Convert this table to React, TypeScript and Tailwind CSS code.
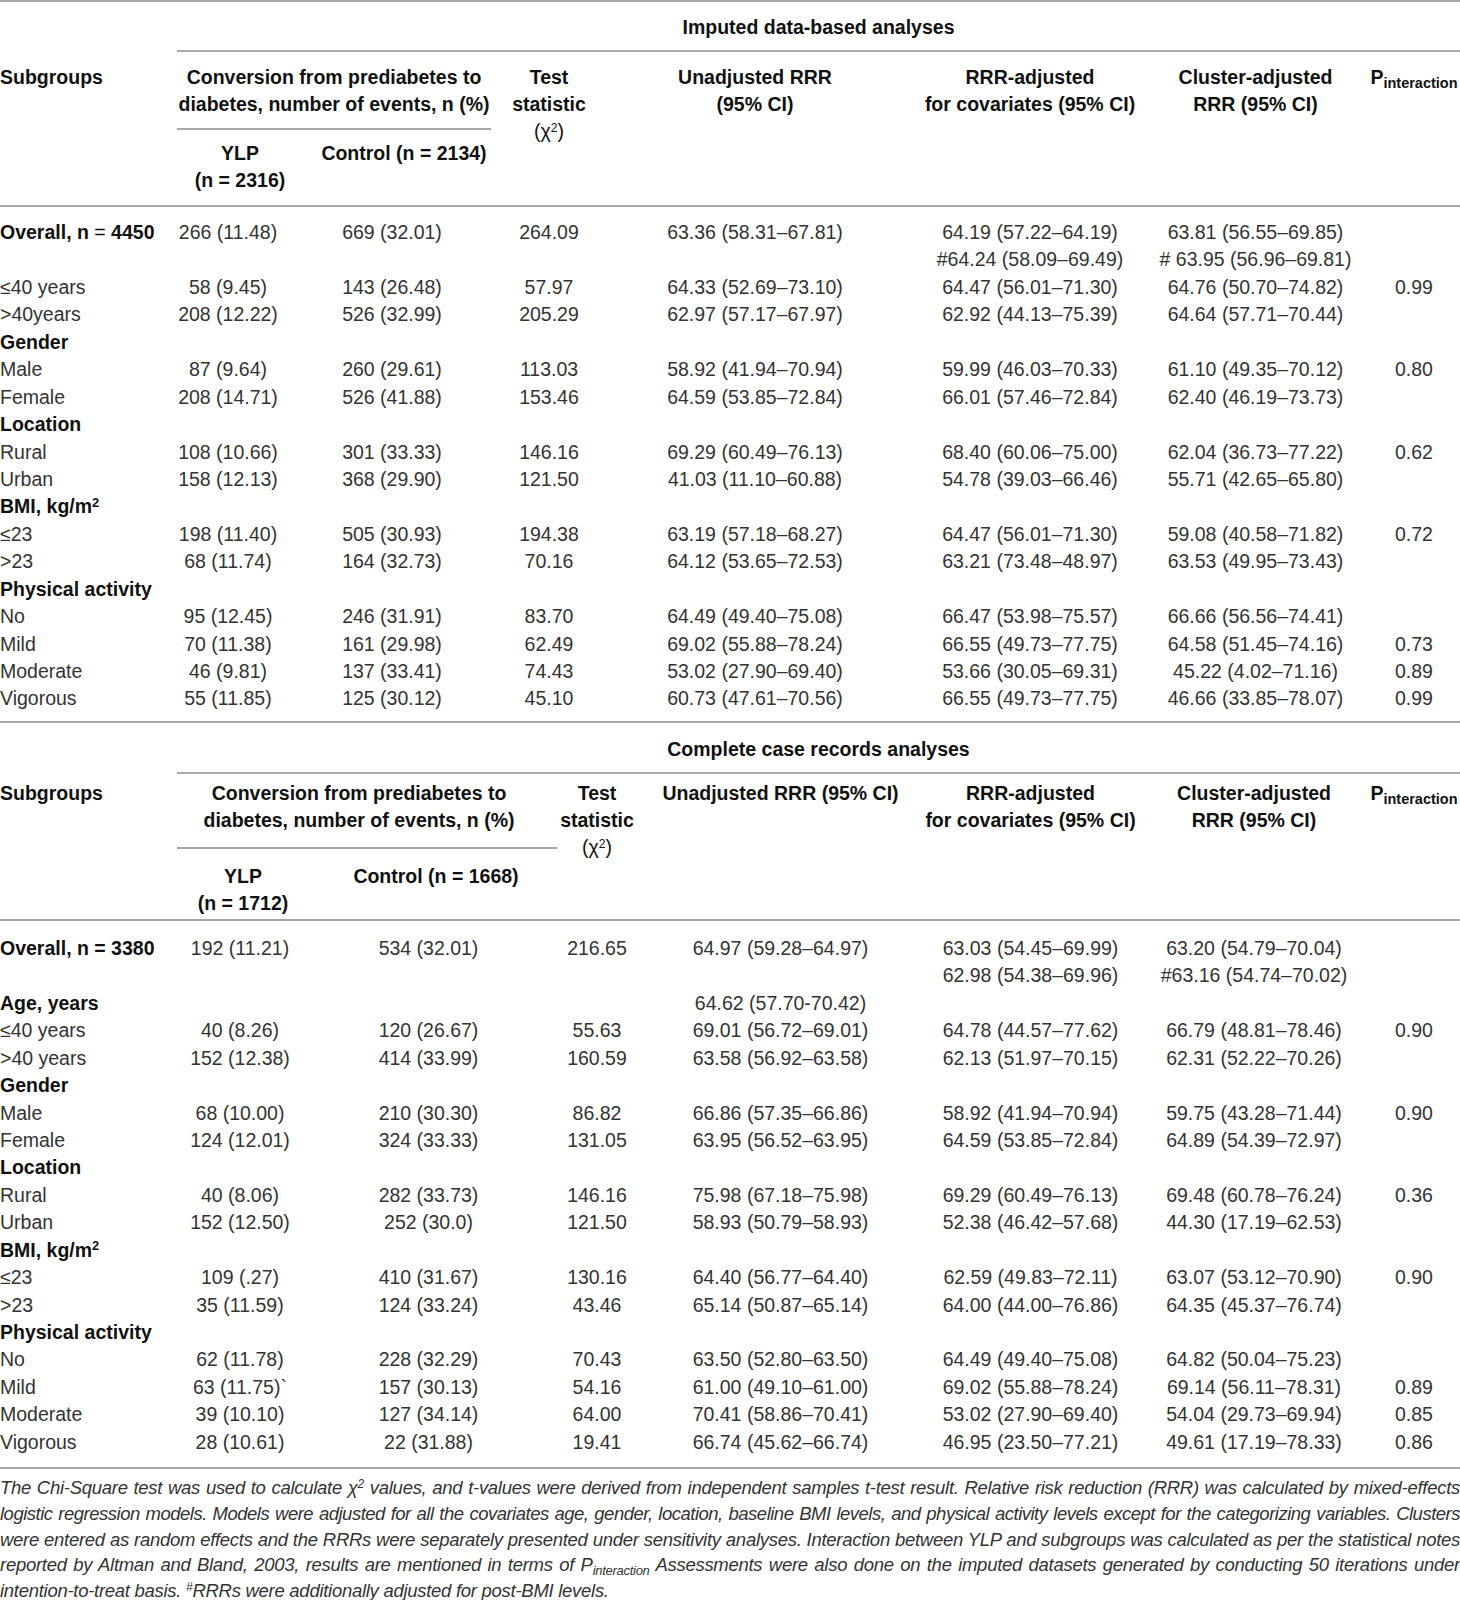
import React from "react";

const T1 = "grid grid-cols-[177px_102px_226px_88px_324px_226px_225px_92px]";
const T2 = "grid grid-cols-[177px_126px_251px_86px_281px_219px_228px_92px]";
const RULE = "h-[2px] bg-[#a9a9a9]";

type R = { l: React.ReactNode; b?: boolean; v?: string[] };

function DataRows({ rows, grid }: { rows: R[]; grid: string }) {
  return (
    <>
      {rows.map((r, i) => (
        <div key={i} className={`${grid} h-[27.45px] leading-[27.45px]`}>
          <div className={r.b ? "whitespace-nowrap font-bold text-[#111]" : "whitespace-nowrap"}>{r.l}</div>
          {[0, 1, 2, 3, 4, 5, 6].map((j) => (
            <div key={j} className="whitespace-nowrap text-center">
              {r.v ? r.v[j] ?? "" : ""}
            </div>
          ))}
        </div>
      ))}
    </>
  );
}

const bmi = (
  <>
    BMI, kg/m<sup className="text-[13px]">2</sup>
  </>
);

const rows1: R[] = [
  {
    l: (
      <>
        Overall, n <span className="font-normal">=</span> 4450
      </>
    ),
    b: true,
    v: ["266 (11.48)", "669 (32.01)", "264.09", "63.36 (58.31–67.81)", "64.19 (57.22–64.19)", "63.81 (56.55–69.85)", ""],
  },
  { l: "", v: ["", "", "", "", "#64.24 (58.09–69.49)", "# 63.95 (56.96–69.81)", ""] },
  { l: "≤40 years", v: ["58 (9.45)", "143 (26.48)", "57.97", "64.33 (52.69–73.10)", "64.47 (56.01–71.30)", "64.76 (50.70–74.82)", "0.99"] },
  { l: ">40years", v: ["208 (12.22)", "526 (32.99)", "205.29", "62.97 (57.17–67.97)", "62.92 (44.13–75.39)", "64.64 (57.71–70.44)", ""] },
  { l: "Gender", b: true },
  { l: "Male", v: ["87 (9.64)", "260 (29.61)", "113.03", "58.92 (41.94–70.94)", "59.99 (46.03–70.33)", "61.10 (49.35–70.12)", "0.80"] },
  { l: "Female", v: ["208 (14.71)", "526 (41.88)", "153.46", "64.59 (53.85–72.84)", "66.01 (57.46–72.84)", "62.40 (46.19–73.73)", ""] },
  { l: "Location", b: true },
  { l: "Rural", v: ["108 (10.66)", "301 (33.33)", "146.16", "69.29 (60.49–76.13)", "68.40 (60.06–75.00)", "62.04 (36.73–77.22)", "0.62"] },
  { l: "Urban", v: ["158 (12.13)", "368 (29.90)", "121.50", "41.03 (11.10–60.88)", "54.78 (39.03–66.46)", "55.71 (42.65–65.80)", ""] },
  { l: bmi, b: true },
  { l: "≤23", v: ["198 (11.40)", "505 (30.93)", "194.38", "63.19 (57.18–68.27)", "64.47 (56.01–71.30)", "59.08 (40.58–71.82)", "0.72"] },
  { l: ">23", v: ["68 (11.74)", "164 (32.73)", "70.16", "64.12 (53.65–72.53)", "63.21 (73.48–48.97)", "63.53 (49.95–73.43)", ""] },
  { l: "Physical activity", b: true },
  { l: "No", v: ["95 (12.45)", "246 (31.91)", "83.70", "64.49 (49.40–75.08)", "66.47 (53.98–75.57)", "66.66 (56.56–74.41)", ""] },
  { l: "Mild", v: ["70 (11.38)", "161 (29.98)", "62.49", "69.02 (55.88–78.24)", "66.55 (49.73–77.75)", "64.58 (51.45–74.16)", "0.73"] },
  { l: "Moderate", v: ["46 (9.81)", "137 (33.41)", "74.43", "53.02 (27.90–69.40)", "53.66 (30.05–69.31)", "45.22 (4.02–71.16)", "0.89"] },
  { l: "Vigorous", v: ["55 (11.85)", "125 (30.12)", "45.10", "60.73 (47.61–70.56)", "66.55 (49.73–77.75)", "46.66 (33.85–78.07)", "0.99"] },
];

const rows2: R[] = [
  {
    l: "Overall, n = 3380",
    b: true,
    v: ["192 (11.21)", "534 (32.01)", "216.65", "64.97 (59.28–64.97)", "63.03 (54.45–69.99)", "63.20 (54.79–70.04)", ""],
  },
  { l: "", v: ["", "", "", "", "62.98 (54.38–69.96)", "#63.16 (54.74–70.02)", ""] },
  { l: "Age, years", b: true, v: ["", "", "", "64.62 (57.70-70.42)", "", "", ""] },
  { l: "≤40 years", v: ["40 (8.26)", "120 (26.67)", "55.63", "69.01 (56.72–69.01)", "64.78 (44.57–77.62)", "66.79 (48.81–78.46)", "0.90"] },
  { l: ">40 years", v: ["152 (12.38)", "414 (33.99)", "160.59", "63.58 (56.92–63.58)", "62.13 (51.97–70.15)", "62.31 (52.22–70.26)", ""] },
  { l: "Gender", b: true },
  { l: "Male", v: ["68 (10.00)", "210 (30.30)", "86.82", "66.86 (57.35–66.86)", "58.92 (41.94–70.94)", "59.75 (43.28–71.44)", "0.90"] },
  { l: "Female", v: ["124 (12.01)", "324 (33.33)", "131.05", "63.95 (56.52–63.95)", "64.59 (53.85–72.84)", "64.89 (54.39–72.97)", ""] },
  { l: "Location", b: true },
  { l: "Rural", v: ["40 (8.06)", "282 (33.73)", "146.16", "75.98 (67.18–75.98)", "69.29 (60.49–76.13)", "69.48 (60.78–76.24)", "0.36"] },
  { l: "Urban", v: ["152 (12.50)", "252 (30.0)", "121.50", "58.93 (50.79–58.93)", "52.38 (46.42–57.68)", "44.30 (17.19–62.53)", ""] },
  { l: bmi, b: true },
  { l: "≤23", v: ["109 (.27)", "410 (31.67)", "130.16", "64.40 (56.77–64.40)", "62.59 (49.83–72.11)", "63.07 (53.12–70.90)", "0.90"] },
  { l: ">23", v: ["35 (11.59)", "124 (33.24)", "43.46", "65.14 (50.87–65.14)", "64.00 (44.00–76.86)", "64.35 (45.37–76.74)", ""] },
  { l: "Physical activity", b: true },
  { l: "No", v: ["62 (11.78)", "228 (32.29)", "70.43", "63.50 (52.80–63.50)", "64.49 (49.40–75.08)", "64.82 (50.04–75.23)", ""] },
  { l: "Mild", v: ["63 (11.75)`", "157 (30.13)", "54.16", "61.00 (49.10–61.00)", "69.02 (55.88–78.24)", "69.14 (56.11–78.31)", "0.89"] },
  { l: "Moderate", v: ["39 (10.10)", "127 (34.14)", "64.00", "70.41 (58.86–70.41)", "53.02 (27.90–69.40)", "54.04 (29.73–69.94)", "0.85"] },
  { l: "Vigorous", v: ["28 (10.61)", "22 (31.88)", "19.41", "66.74 (45.62–66.74)", "46.95 (23.50–77.21)", "49.61 (17.19–78.33)", "0.86"] },
];

const chi = (
  <span className="font-normal">
    (χ<sup className="text-[12px]">2</sup>)
  </span>
);

const pInt = (
  <span className="font-bold">
    P<sub className="text-[14.5px]">interaction</sub>
  </span>
);

const FN = "whitespace-nowrap text-justify [text-align-last:justify]";

export default function App() {
  return (
    <div className="w-[1460px] bg-white font-['Liberation_Sans',Arial,Helvetica,sans-serif] text-[19.5px] text-[#333]">
      {/* ===== Table 1 ===== */}
      <div className={RULE} />
      <div className="pl-[177px] pt-[12px] pb-[9px] text-center font-bold leading-[27px] text-[#111]">
        Imputed data-based analyses
      </div>
      <div className="ml-[177px] h-[2px] bg-[#a9a9a9]" />
      <div className="flex leading-[27px] font-bold text-[#111]">
        <div className="w-[177px] shrink-0 pt-[12px]">Subgroups</div>
        <div className="w-[328px] shrink-0">
          <div className="w-[314px] pt-[12px] text-center">
            Conversion from prediabetes to
            <br />
            diabetes, number of events, n (%)
          </div>
          <div className="mt-[10px] h-[2px] w-[314px] bg-[#a9a9a9]" />
          <div className="flex pt-[10px] pb-[11px]">
            <div className="w-[126px] shrink-0 text-center">
              YLP
              <br />
              (n = 2316)
            </div>
            <div className="w-[202px] shrink-0 text-center">Control (n = 2134)</div>
          </div>
        </div>
        <div className="w-[88px] shrink-0 pt-[12px] text-center">
          Test
          <br />
          statistic
          <br />
          {chi}
        </div>
        <div className="w-[324px] shrink-0 pt-[12px] text-center">
          Unadjusted RRR
          <br />
          (95% CI)
        </div>
        <div className="w-[226px] shrink-0 pt-[12px] text-center">
          RRR-adjusted
          <br />
          for covariates (95% CI)
        </div>
        <div className="w-[225px] shrink-0 pt-[12px] text-center">
          Cluster-adjusted
          <br />
          RRR (95% CI)
        </div>
        <div className="w-[92px] shrink-0 pt-[12px] text-center whitespace-nowrap">{pInt}</div>
      </div>
      <div className={RULE} />
      <div className="pt-[12px] pb-[8px]">
        <DataRows rows={rows1} grid={T1} />
      </div>

      {/* ===== Table 2 ===== */}
      <div className={RULE} />
      <div className="pl-[177px] pt-[13px] pb-[9px] text-center font-bold leading-[27px] text-[#111]">
        Complete case records analyses
      </div>
      <div className="ml-[177px] h-[2px] bg-[#a9a9a9]" />
      <div className="flex leading-[27px] font-bold text-[#111]">
        <div className="w-[177px] shrink-0 pt-[6px]">Subgroups</div>
        <div className="w-[377px] shrink-0">
          <div className="w-[364px] pt-[6px] text-center">
            Conversion from prediabetes to
            <br />
            diabetes, number of events, n (%)
          </div>
          <div className="mt-[13px] h-[2px] w-[380px] bg-[#a9a9a9]" />
          <div className="flex pt-[14px] pb-[2px]">
            <div className="w-[132px] shrink-0 text-center">
              YLP
              <br />
              (n = 1712)
            </div>
            <div className="w-[254px] shrink-0 text-center">Control (n = 1668)</div>
          </div>
        </div>
        <div className="w-[86px] shrink-0 pt-[6px] text-center">
          Test
          <br />
          statistic
          <br />
          {chi}
        </div>
        <div className="w-[281px] shrink-0 pt-[6px] text-center whitespace-nowrap">Unadjusted RRR (95% CI)</div>
        <div className="w-[219px] shrink-0 pt-[6px] text-center whitespace-nowrap">
          RRR-adjusted
          <br />
          for covariates (95% CI)
        </div>
        <div className="w-[228px] shrink-0 pt-[6px] text-center">
          Cluster-adjusted
          <br />
          RRR (95% CI)
        </div>
        <div className="w-[92px] shrink-0 pt-[6px] text-center whitespace-nowrap">{pInt}</div>
      </div>
      <div className={RULE} />
      <div className="pt-[14px] pb-[11px]">
        <DataRows rows={rows2} grid={T2} />
      </div>
      <div className={RULE} />

      {/* ===== Footnote ===== */}
      <div className="pt-[6px] text-[18.5px] italic leading-[25.75px] tracking-[-0.28px] text-[#333]">
        <div className={FN}>
          The Chi-Square test was used to calculate <span>χ<sup className="text-[12px]">2</sup></span> values, and t-values were derived from independent samples t-test result. Relative risk reduction (RRR) was calculated by mixed-effects
        </div>
        <div className={`${FN} tracking-[-0.5px]`}>
          logistic regression models. Models were adjusted for all the covariates age, gender, location, baseline BMI levels, and physical activity levels except for the categorizing variables. Clusters
        </div>
        <div className={FN}>
          were entered as random effects and the RRRs were separately presented under sensitivity analyses. Interaction between YLP and subgroups was calculated as per the statistical notes
        </div>
        <div className={FN}>
          reported by Altman and Bland, 2003, results are mentioned in terms of P<sub className="text-[13px]">interaction</sub> Assessments were also done on the imputed datasets generated by conducting 50 iterations under
        </div>
        <div className="whitespace-nowrap">
          intention-to-treat basis. <sup className="text-[12px]">#</sup>RRRs were additionally adjusted for post-BMI levels.
        </div>
      </div>
    </div>
  );
}
